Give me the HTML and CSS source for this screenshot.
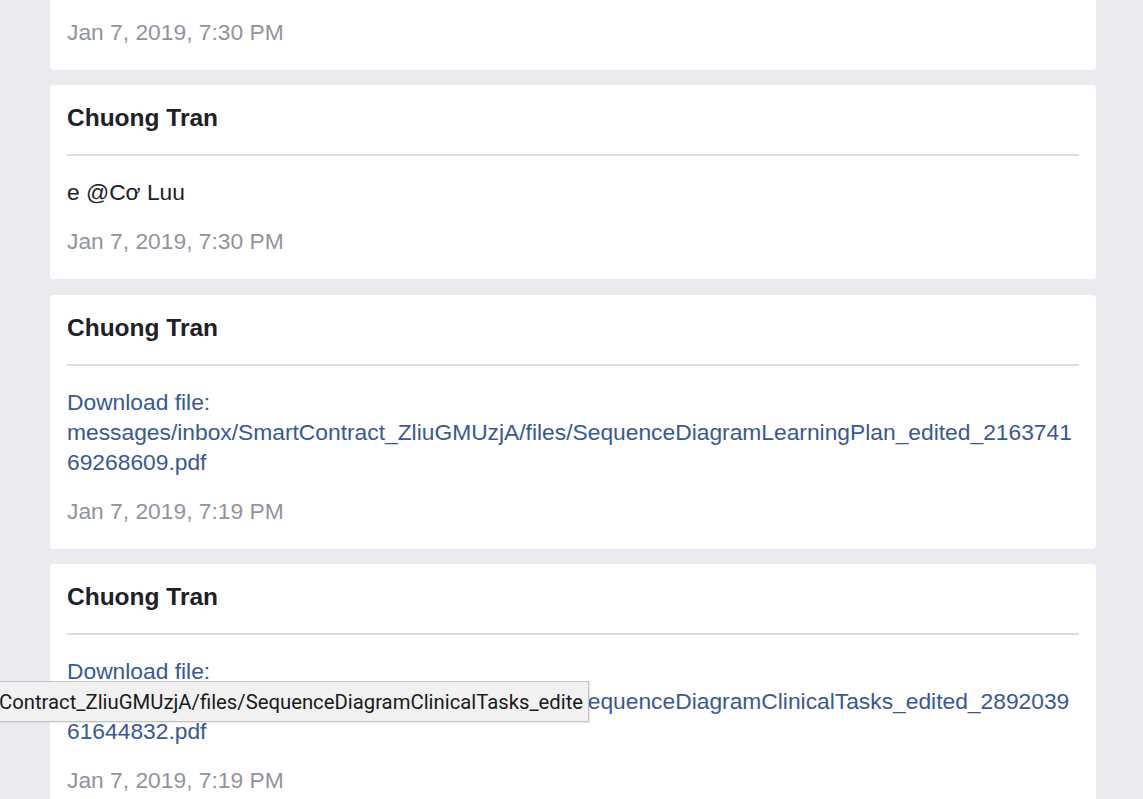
FILE: index.html
```html
<!DOCTYPE html>
<html lang="en">
<head>
<meta charset="utf-8">
<title>Messages</title>
<link rel="stylesheet" href="styles.css">
</head>
<body>
<div class="thread">
  <div class="msg">
    <div class="msg-author">Chuong Tran</div>
    <div class="msg-body">ok</div>
    <div class="msg-date">Jan 7, 2019, 7:30 PM</div>
  </div>
  <div class="msg">
    <div class="msg-author">Chuong Tran</div>
    <div class="msg-body">e @Cơ Luu</div>
    <div class="msg-date">Jan 7, 2019, 7:30 PM</div>
  </div>
  <div class="msg">
    <div class="msg-author">Chuong Tran</div>
    <div class="msg-body"><a class="file-link" href="#">Download file: messages/inbox/SmartContract_ZliuGMUzjA/files/SequenceDiagramLearningPlan_edited_216374169268609.pdf</a></div>
    <div class="msg-date">Jan 7, 2019, 7:19 PM</div>
  </div>
  <div class="msg">
    <div class="msg-author">Chuong Tran</div>
    <div class="msg-body"><a class="file-link" href="#">Download file: messages/inbox/SmartContract_ZliuGMUzjA/files/SequenceDiagramClinicalTasks_edited_289203961644832.pdf</a></div>
    <div class="msg-date">Jan 7, 2019, 7:19 PM</div>
  </div>
</div>
<div class="tooltip"><span class="tooltip-text">Contract_ZliuGMUzjA/files/SequenceDiagramClinicalTasks_edited_289203961644832.pdf</span></div>
</body>
</html>
```
FILE: styles.css
```css
html, body {
  margin: 0;
  padding: 0;
}
body {
  background: #e9ebee;
  font-family: "Liberation Sans", Arial, sans-serif;
  color: #1d2129;
  height: 799px;
  overflow: hidden;
  position: relative;
}
.thread {
  margin-top: -124.5px;
  margin-left: 50px;
  width: 1046px;
  display: flex;
  flex-direction: column;
  gap: 15.5px;
}
.msg {
  background: #ffffff;
  border-radius: 4px;
  padding: 19px 17px 23px;
}
.msg-author {
  font-size: 24.5px;
  line-height: 28px;
  font-weight: bold;
  color: #1d2129;
  padding-bottom: 22px;
  border-bottom: 2px solid #dadde1;
}
.msg-body {
  padding-top: 21px;
  font-size: 22.8px;
  line-height: 30px;
  overflow-wrap: break-word;
}
.file-link {
  color: #385898;
  text-decoration: none;
}
.msg-date {
  margin-top: 19px;
  font-size: 22.8px;
  line-height: 30px;
  color: #90949c;
}
.tooltip {
  position: absolute;
  left: 0;
  top: 681px;
  width: 588px;
  height: 39px;
  background: #f1f1f1;
  border: 1px solid #c4c4c4;
  border-left: none;
  box-shadow: 1px 1px 1px rgba(0,0,0,0.08);
  white-space: nowrap;
  display: flex;
  align-items: center;
}
.tooltip-text {
  display: block;
  width: 584px;
  overflow: hidden;
  margin-left: -1px;
  font-family: Roboto, "Liberation Sans", sans-serif;
  font-size: 20.3px;
  color: #1a1a1a;
}
```
